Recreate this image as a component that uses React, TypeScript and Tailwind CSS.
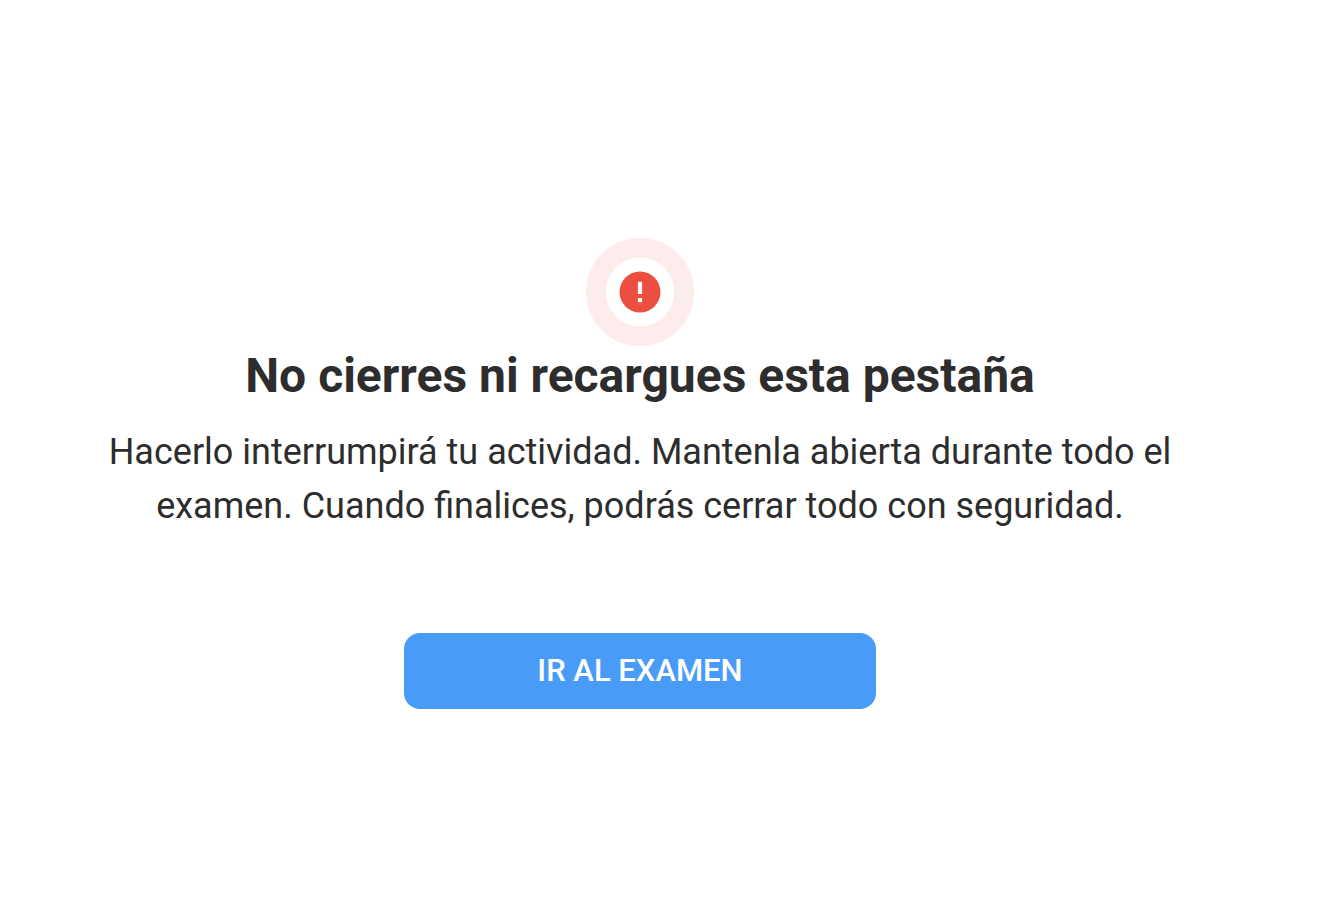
function AlertIcon() {
  return (
    <svg viewBox="0 0 108 108" className="h-[108px] w-[108px]" aria-hidden="true">
      <circle cx="54" cy="54" r="44.1" fill="none" stroke="#fcecec" strokeWidth="19.8" />
      <circle cx="54" cy="54" r="20.5" fill="#ec4e3f" />
      <path d="M51.9 43.7h4.2V56h-4.2zM51.9 60.1h4.2v4.2h-4.2z" fill="#fff" />
    </svg>
  );
}

export default function App() {
  return (
    <main className="flex min-h-screen flex-col items-center bg-white pt-[238px] pr-14 font-[Roboto,sans-serif] text-[#2d2d2d]">
      <AlertIcon />
      <h1 className="text-center text-[48px] leading-[60px] font-bold">
        No cierres ni recargues esta pestaña
      </h1>
      <p className="mt-[19px] max-w-[1088px] text-center text-[36px] leading-[54px]">
        Hacerlo interrumpirá tu actividad. Mantenla abierta durante todo el
        examen. Cuando finalices, podrás cerrar todo con seguridad.
      </p>
      <button
        type="button"
        className="mt-[100px] w-full max-w-[472px] rounded-2xl bg-[#489cf8] py-[17px] text-[31px] leading-[42px] font-medium text-white uppercase"
      >
        Ir al examen
      </button>
    </main>
  );
}
